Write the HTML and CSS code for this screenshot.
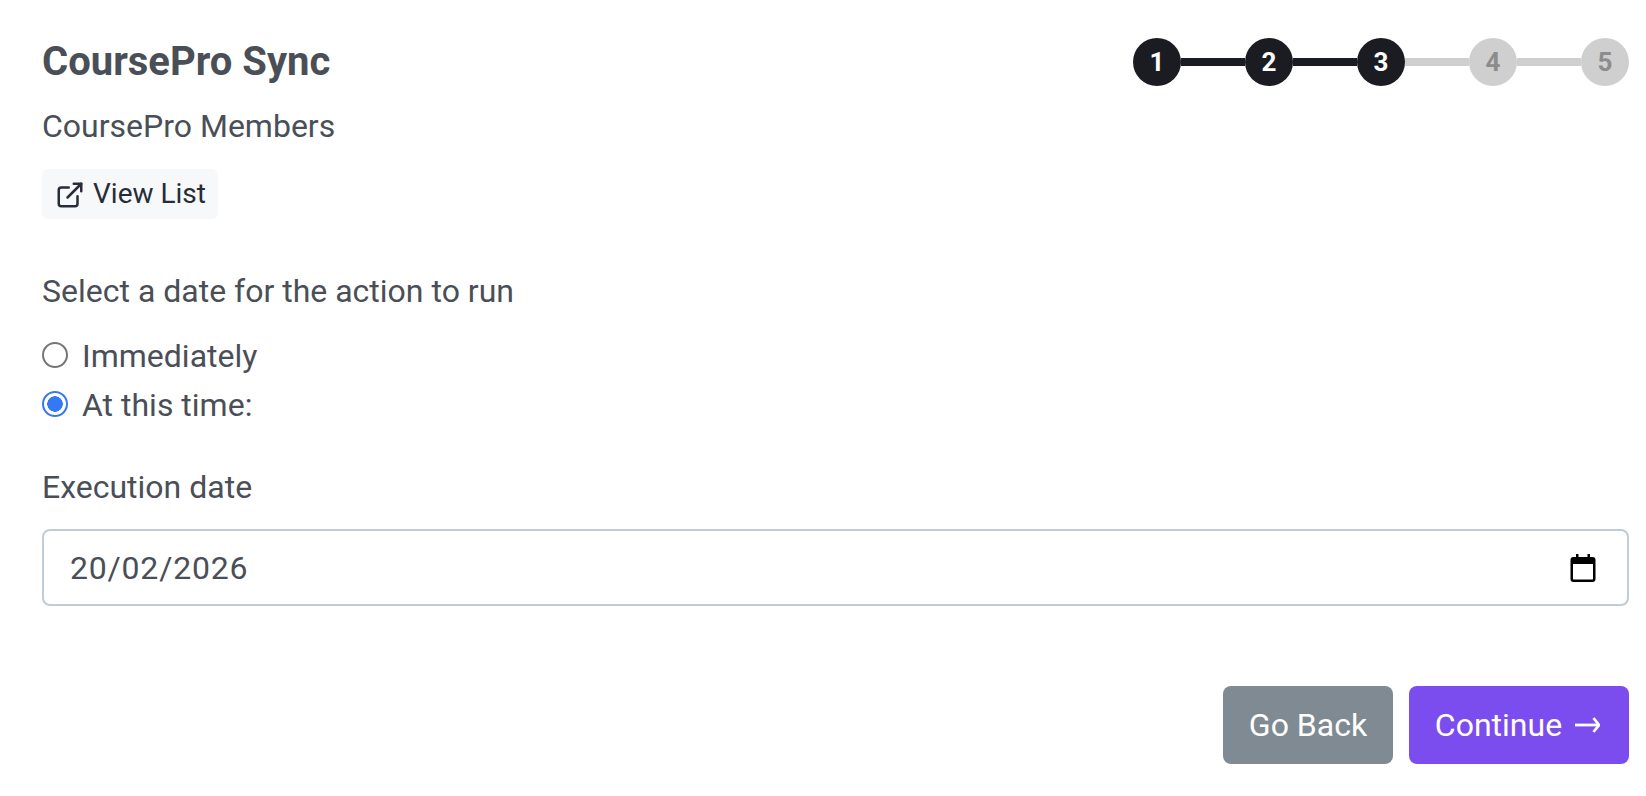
FILE: index.html
```html
<!DOCTYPE html>
<html lang="en">
<head>
<meta charset="utf-8">
<title>CoursePro Sync</title>
<link rel="stylesheet" href="styles.css">
</head>
<body>
<main class="page">
  <header class="top">
    <h1 class="title">CoursePro Sync</h1>
    <ol class="steps">
      <li class="step done">1</li>
      <li class="bar done"></li>
      <li class="step done">2</li>
      <li class="bar done"></li>
      <li class="step done">3</li>
      <li class="bar"></li>
      <li class="step">4</li>
      <li class="bar"></li>
      <li class="step">5</li>
    </ol>
  </header>
  <p class="list-name">CoursePro Members</p>
  <a class="view" href="#">
    <svg class="view-icon" viewBox="0 0 24 24" fill="none" stroke="currentColor" stroke-width="2" stroke-linecap="round" stroke-linejoin="round"><path d="M18 13v6a2 2 0 0 1-2 2H5a2 2 0 0 1-2-2V8a2 2 0 0 1 2-2h6"/><path d="M15 3h6v6"/><path d="M10 14 21 3"/></svg>
    <span>View List</span>
  </a>
  <p class="prompt">Select a date for the action to run</p>
  <div class="radios">
    <label class="radio"><input type="radio" name="when"><span>Immediately</span></label>
    <label class="radio"><input type="radio" name="when" checked><span>At this time:</span></label>
  </div>
  <p class="field-label">Execution date</p>
  <div class="date">
    <span>20/02/2026</span>
    <svg class="cal" viewBox="0 0 26 28"><path d="M6 0h2.500v3h9V0H20v3h2.500A3 3 0 0 1 25.500 6v19a3 3 0 0 1-3 3h-19a3 3 0 0 1-3-3V6a3 3 0 0 1 3-3H6zM3 10v15c0 .3.200.5.500.5h19c.3 0 .5-.2.500-.5V10z" fill="#000"/></svg>
  </div>
  <div class="actions">
    <button class="btn back" type="button">Go Back</button>
    <button class="btn next" type="button">Continue<svg class="arrow" viewBox="0 0 25 16" fill="none" stroke="currentColor" stroke-width="2.800"><path d="M0 8h24"/><path d="M18.500 1l5.500 7-5.500 7"/></svg></button>
  </div>
</main>
</body>
</html>
```
FILE: styles.css
```css
* { box-sizing: border-box; }
html, body { margin: 0; padding: 0; background: #fff; }
body { font-family: Roboto, "Liberation Sans", sans-serif; color: #4a4f57; }
.page { padding: 38px 17px 0 42px; }
.top { display: flex; justify-content: space-between; align-items: center; height: 48px; }
.title { margin: 0; font-size: 40px; font-weight: 700; color: #4a4f57; line-height: 48px; }
.steps { display: flex; align-items: center; list-style: none; margin: 0; padding: 0; }
.step { width: 48px; height: 48px; border-radius: 50%; background: #cfcfcf; color: #8c8c8c; font-size: 26px; font-weight: 700; display: flex; align-items: center; justify-content: center; }
.step.done { background: #1a1c22; color: #fff; }
.bar { width: 64px; height: 8px; background: #cfcfcf; }
.bar.done { background: #1a1c22; }
.list-name { margin: 22px 0 0; font-size: 32px; line-height: 36px; }
.view { display: inline-flex; align-items: center; gap: 8px; height: 50px; margin-top: 25px; padding: 0 12px 2px 13px; background: #f7f8fa; border-radius: 6px; color: #272d38; font-size: 28px; text-decoration: none; }
.view-icon { width: 30px; height: 30px; margin-top: 3px; }
.prompt { margin: 54px 0 0; font-size: 32px; line-height: 36px; }
.radios { margin-top: 29px; display: flex; flex-direction: column; gap: 12px; }
.radio { display: flex; align-items: center; gap: 14px; font-size: 32px; line-height: 37px; height: 37px; }
.radio input { appearance: none; width: 26px; height: 26px; margin: 0 0 3px; border: 2px solid #767676; border-radius: 50%; background: #fff; }
.radio input:checked { border-color: #3478f6; background: radial-gradient(circle, #3478f6 0 7.500px, #fff 8px); }
.field-label { margin: 45px 0 0; font-size: 32px; line-height: 36px; }
.date { display: flex; align-items: center; justify-content: space-between; height: 77px; margin-top: 24px; padding: 0 31px 0 26px; border: 2px solid #c0ccd6; border-radius: 8px; font-size: 32px; letter-spacing: 0.8px; }
.cal { width: 26px; height: 28px; }
.actions { display: flex; justify-content: flex-end; gap: 16px; margin-top: 80px; }
.btn { display: flex; align-items: center; justify-content: center; height: 78px; border: 0; border-radius: 8px; color: #fff; font-family: inherit; font-size: 32px; padding: 0; white-space: nowrap; }
.back { background: #7f8a92; width: 170px; }
.next { background: #7c4dee; width: 220px; padding-right: 3px; }
.arrow { width: 25px; height: 16px; margin-left: 13px; }
```
